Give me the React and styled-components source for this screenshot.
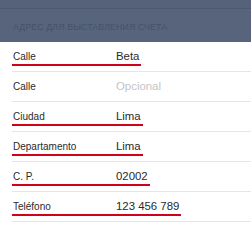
import styled, { createGlobalStyle } from 'styled-components';

const GlobalStyle = createGlobalStyle`
    body {
        margin: 0;
        background: #ffffff;
        font-family: "Liberation Sans", Arial, sans-serif;
    }
`

const fields = [
    { label: 'Calle', value: 'Beta', filled: true },
    { label: 'Calle', value: 'Opcional', filled: false },
    { label: 'Ciudad', value: 'Lima', filled: true },
    { label: 'Departamento', value: 'Lima', filled: true },
    { label: 'C. P.', value: '02002', filled: true },
    { label: 'Teléfono', value: '123 456 789', filled: true },
]

export default function App () {
    return (
        <Page>
            <GlobalStyle />
            <Header>
                <TopBar />
                <SectionTitle>Адрес для выставления счета</SectionTitle>
            </Header>
            <FieldList>
                {fields.map((field, i) =>
                    <FieldRow key={i}>
                        <FieldContent $filled={field.filled}>
                            <Label>{field.label}</Label>
                            <Value $filled={field.filled}>{field.value}</Value>
                        </FieldContent>
                    </FieldRow>
                )}
            </FieldList>
        </Page>
    )
}

const Page = styled.div`
    width: 251px;
    height: 226px;
    overflow: hidden;
    background: #ffffff;
`
const Header = styled.div`
    background: #57647c;
    height: 42px;
    display: flex;
    flex-direction: column;
`
const TopBar = styled.div`
    height: 8px;
    border-bottom: 1px solid #4d596f;
    background: #55627a;
`
const SectionTitle = styled.div`
    flex: 1;
    display: flex;
    align-items: center;
    padding: 2px 0 0 13px;
    font-size: 8.8px;
    text-transform: uppercase;
    color: #46526a;
    letter-spacing: 0.1px;
`
const FieldList = styled.div`
    display: flex;
    flex-direction: column;
`
const FieldRow = styled.div`
    height: 30px;
    margin-left: 12px;
    border-bottom: 1px solid #e6e6e9;
    box-sizing: border-box;
    display: flex;
    align-items: flex-end;
    padding-bottom: 5px;
`
const FieldContent = styled.div`
    display: inline-flex;
    align-items: flex-end;
    padding: 0 2px 2px 1px;
    border-bottom: 2px solid ${props => props.$filled ? '#d0021b' : 'transparent'};
    height: 20px;
    box-sizing: border-box;
`
const Label = styled.span`
    width: 103px;
    font-size: 10px;
    color: #2a2a2c;
`
const Value = styled.span`
    font-size: 11.4px;
    color: ${props => props.$filled ? '#2a2a2c' : '#c4c4c8'};
`
